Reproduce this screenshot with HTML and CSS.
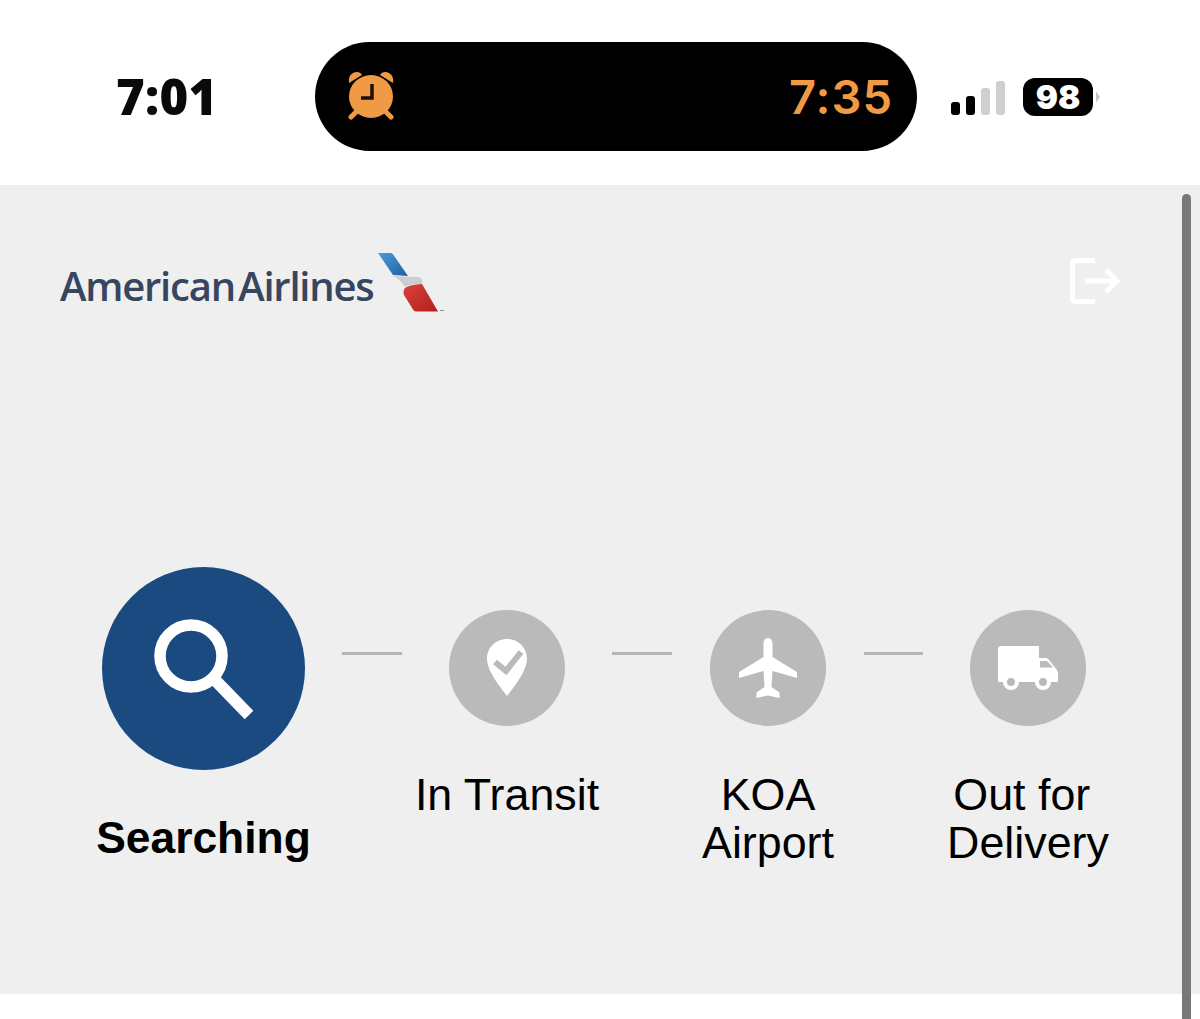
FILE: index.html
```html
<!DOCTYPE html>
<html lang="en">
<head>
<meta charset="utf-8">
<title>American Airlines bag tracker</title>
<link rel="stylesheet" href="styles.css">
</head>
<body>
<header class="status">
  <div class="status-time">7:01</div>
  <div class="island">
    <svg class="alarm" viewBox="0 0 48 50" width="48" height="50" aria-hidden="true">
      <path d="M2 13C1 7 4 2 10 2c2 0 4 1 5 3z" fill="#f09a45"/>
      <path d="M46 13c1-6-2-11-8-11-2 0-4 1-5 3z" fill="#f09a45"/>
      <path d="M10 41l-6 6M38 41l6 6" stroke="#f09a45" stroke-width="5" stroke-linecap="round"/>
      <ellipse cx="24" cy="26.500" rx="22" ry="21.500" fill="#f09a45"/>
      <path d="M25 14v14H14" fill="none" stroke="#1a1008" stroke-width="3.500"/>
    </svg>
    <div class="island-time">7:35</div>
  </div>
  <div class="status-right">
    <div class="signal">
      <span class="bar bar-1"></span>
      <span class="bar bar-2"></span>
      <span class="bar bar-3"></span>
      <span class="bar bar-4"></span>
    </div>
    <div class="battery">98</div>
    <span class="battery-tip"></span>
  </div>
</header>

<main class="panel">
  <div class="brand-row">
    <div class="brand">
      <span class="brand-name">American Airlines</span>
      <svg class="brand-mark" viewBox="0 0 68 62" width="68" height="62" aria-hidden="true">
        <defs>
          <linearGradient id="blue" x1="0" y1="0" x2="1" y2="1">
            <stop offset="0" stop-color="#4f9ad6"/>
            <stop offset="1" stop-color="#1d5fa6"/>
          </linearGradient>
          <linearGradient id="red" x1="0" y1="0" x2="1" y2="1">
            <stop offset="0" stop-color="#d8423a"/>
            <stop offset="1" stop-color="#b4201f"/>
          </linearGradient>
        </defs>
        <path d="M0 0h12c1.500 0 2.500.5 3.500 2L30 23 15 22z" fill="url(#blue)"/>
        <path d="M14 23l24 1c4 0 6 1 6 3.500v3.500c-8 0-14 .5-17 3-2-3-6-9-13-11z" fill="#c9ced3"/>
        <path d="M27 35c3-2.500 10-3.500 17-4l16 27.500H39c-2 0-3-.5-4-2L26 42c-1-2.500-.5-5.500 1-7z" fill="url(#red)"/>
        <path d="M62 57h4v1h-4z" fill="#8b8f96"/>
      </svg>
    </div>
    <svg class="logout" viewBox="0 0 50 46" width="50" height="46" aria-hidden="true">
      <path d="M25 2.500H5a2.500 2.500 0 0 0-2.500 2.500v36a2.500 2.500 0 0 0 2.500 2.500h20" fill="none" stroke="#fff" stroke-width="5"/>
      <path d="M15 23h31M36 12l11 11-11 11" fill="none" stroke="#fff" stroke-width="5"/>
    </svg>
  </div>

  <ol class="steps">
    <li class="step step-wide">
      <div class="disc disc-active">
        <svg class="icon-search" viewBox="0 0 100 100" width="100" height="100" aria-hidden="true">
          <circle cx="37" cy="37" r="31" fill="none" stroke="#fff" stroke-width="11.500"/>
          <path d="M62 62l33 34" fill="none" stroke="#fff" stroke-width="12"/>
        </svg>
      </div>
      <div class="label label-active">Searching</div>
    </li>
    <li class="connector"></li>
    <li class="step step-mid">
      <div class="disc">
        <svg viewBox="0 0 42 60" width="42" height="60" aria-hidden="true">
          <path d="M21 1C9.500 1 1 10 1 20.500 1 33 14 49 21 58c7-9 20-25 20-37.500C41 10 32.500 1 21 1z" fill="#fff"/>
          <path d="M9 24l11 9 15-19" fill="none" stroke="#bababa" stroke-width="6"/>
        </svg>
      </div>
      <div class="label">In Transit</div>
    </li>
    <li class="connector"></li>
    <li class="step step-narrow">
      <div class="disc">
        <svg viewBox="0 0 60 60" width="60" height="60" aria-hidden="true">
          <path d="M30 0c3 0 4.500 3 4.500 6v13L59 34v6L34.500 33l-1 16 8 5.500V60L30 57.500 18.500 60v-5.500l8-5.500-1-16L1 40v-6l24.500-15V6c0-3 1.500-6 4.500-6z" fill="#fff"/>
        </svg>
      </div>
      <div class="label">KOA<br>Airport</div>
    </li>
    <li class="connector"></li>
    <li class="step step-mid">
      <div class="disc">
        <svg viewBox="0 0 60 44" width="60" height="44" aria-hidden="true">
          <path d="M3 0h38v12h6c2 0 3 .5 4 2l8 10c.500 1 1 2 1 3v9H0V3c0-2 1-3 3-3z" fill="#fff"/>
          <path d="M42 15h7l6 6.500H42z" fill="#bababa"/>
          <circle cx="13" cy="36" r="8" fill="#fff"/>
          <circle cx="45" cy="36" r="8" fill="#fff"/>
          <circle cx="13" cy="36" r="4" fill="#bababa"/>
          <circle cx="45" cy="36" r="4" fill="#bababa"/>
        </svg>
      </div>
      <div class="label">Out for <br>Delivery</div>
    </li>
  </ol>
</main>
<div class="scrollbar"></div>
</body>
</html>
```

FILE: styles.css
```css
* { box-sizing: border-box; }

html, body {
  margin: 0;
  height: 1019px;
  overflow: hidden;
  background: #fff;
}

body {
  position: relative;
  font-family: "Liberation Sans", Arial, sans-serif;
  color: #000;
}

.status {
  height: 185px;
  padding-top: 42px;
  display: flex;
  align-items: flex-start;
}

.status-time {
  width: 315px;
  height: 109px;
  padding: 0 0 0 116px;
  font: 800 49px/109px "Open Sans", sans-serif;
  letter-spacing: 0.3px;
  color: #0a0a0a;
}

.island {
  width: 602px;
  height: 109px;
  padding: 0 24px 0 32px;
  border-radius: 55px;
  background: #000;
  display: flex;
  align-items: center;
  justify-content: space-between;
}

.alarm { display: block; margin-top: -3px; }

.island-time {
  font: 600 47px/109px Inter, sans-serif;
  color: #f09a45;
  letter-spacing: 1px;
  margin-top: -1px;
}

.status-right {
  height: 109px;
  padding-left: 34px;
  display: flex;
  align-items: center;
}

.signal {
  display: flex;
  align-items: flex-end;
  gap: 6px;
  width: 54px;
  height: 34px;
  margin-top: 2px;
}

.bar {
  display: block;
  width: 9px;
  border-radius: 3px;
  background: #000;
}

.bar-1 { height: 13px; }
.bar-2 { height: 19px; }
.bar-3 { height: 27px; background: #cfcfcf; }
.bar-4 { height: 34px; background: #cfcfcf; }

.battery {
  width: 70px;
  height: 38px;
  margin-left: 18px;
  margin-top: 1px;
  border-radius: 12px;
  background: #000;
  color: #fff;
  font: 900 33px/38px Inter, sans-serif;
  text-align: center;
}

.battery-tip {
  width: 4px;
  height: 11px;
  margin-left: 3px;
  margin-top: 1px;
  background: #c4c4c4;
  clip-path: polygon(0 0, 100% 50%, 0 100%);
}

.panel {
  height: 809px;
  background: #efefef;
  padding-top: 67px;
}

.brand-row {
  display: flex;
  justify-content: space-between;
  align-items: flex-start;
  padding: 0 80px 0 60px;
}

.brand {
  display: flex;
  align-items: flex-start;
}

.brand-name {
  font: 600 40px/68px "Open Sans", sans-serif;
  color: #36465f;
  letter-spacing: -1.2px;
  word-spacing: -6px;
  width: 318px;
  white-space: nowrap;
}

.brand-mark { display: block; margin-top: 1px; }

.logout { display: block; margin-top: 6px; }

.steps {
  list-style: none;
  margin: 0;
  padding: 0 0 0 66px;
  margin-top: 247px;
  display: flex;
  align-items: flex-start;
}

.step {
  flex: none;
  display: flex;
  flex-direction: column;
  align-items: center;
  padding-top: 43px;
}

.step-wide { width: 275px; margin-right: 1px; padding-top: 0; }
.step-mid { width: 210px; }
.step-narrow { width: 192px; }

.disc {
  width: 116px;
  height: 116px;
  border-radius: 50%;
  background: #bababa;
  display: flex;
  align-items: center;
  justify-content: center;
}

.disc-active {
  width: 203px;
  height: 203px;
  background: #1a4a80;
}

.icon-search { overflow: visible; }

.label {
  margin-top: 44px;
  font-size: 44.8px;
  line-height: 48px;
  text-align: center;
  white-space: pre;
}

.label-active {
  font-size: 44.4px;
  font-weight: 700;
}

.connector {
  flex: none;
  width: 60px;
  height: 3px;
  margin-top: 85px;
  background: #b5b5b5;
}

.step-narrow + .connector { width: 59px; }

.scrollbar {
  position: absolute;
  top: 194px;
  left: 1182px;
  width: 9px;
  height: 825px;
  border-radius: 5px 5px 0 0;
  background: #787878;
}
```
